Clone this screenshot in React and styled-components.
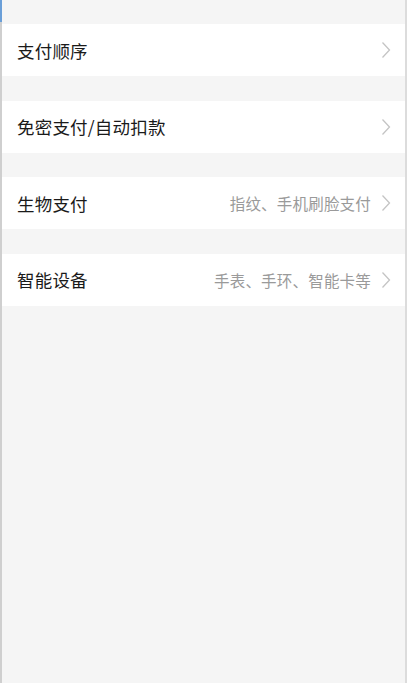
import styled, { createGlobalStyle } from 'styled-components';

const GlobalStyle = createGlobalStyle`
  html, body {
    margin: 0;
    padding: 0;
    background: #f5f5f5;
  }
  body {
    font-family: "Noto Sans CJK SC", "Noto Sans", sans-serif;
  }
`;

const items = [
  { title: '支付顺序' },
  { title: '免密支付/自动扣款' },
  { title: '生物支付', hint: '指纹、手机刷脸支付' },
  { title: '智能设备', hint: '手表、手环、智能卡等' },
];

const Chevron = () => (
  <svg width='10' height='18' viewBox='0 0 10 18' fill='none'>
    <path d='M1.5 1.5 L8.5 9 L1.5 16.5' stroke='#c4c4c4' strokeWidth='1.3' />
  </svg>
);

const App = () => {
  return (
    <>
      <GlobalStyle />
      <Page>
        <List>
          {items.map((item) => (
            <Row key={item.title}>
              <Title>{item.title}</Title>
              <Right>
                {item.hint && <Hint>{item.hint}</Hint>}
                <Chevron />
              </Right>
            </Row>
          ))}
        </List>
      </Page>
    </>
  );
};

const Page = styled.div`
  position: relative;
  box-sizing: border-box;
  min-height: 683px;
  width: 407px;
  background: #f5f5f5;
  border-left: 2px solid #cfcfcf;
  border-right: 2px solid #dcdcdc;
  padding-top: 24px;
  &::before {
    content: '';
    position: absolute;
    left: -2px;
    top: 0;
    width: 2px;
    height: 22px;
    background: #6a9fd8;
  }
`;

const List = styled.div`
  display: flex;
  flex-direction: column;
  gap: 24.6px;
`;

const Row = styled.div`
  display: flex;
  align-items: center;
  justify-content: space-between;
  height: 52px;
  background: #fff;
  padding: 0 14px 0 15px;
`;

const Title = styled.span`
  font-size: 17.5px;
  color: #1a1a1a;
  letter-spacing: 0.2px;
`;

const Right = styled.div`
  display: flex;
  align-items: center;
  gap: 10px;
`;

const Hint = styled.span`
  font-size: 15.5px;
  color: #9a9a9a;
  letter-spacing: 0.2px;
`;

export default App;
